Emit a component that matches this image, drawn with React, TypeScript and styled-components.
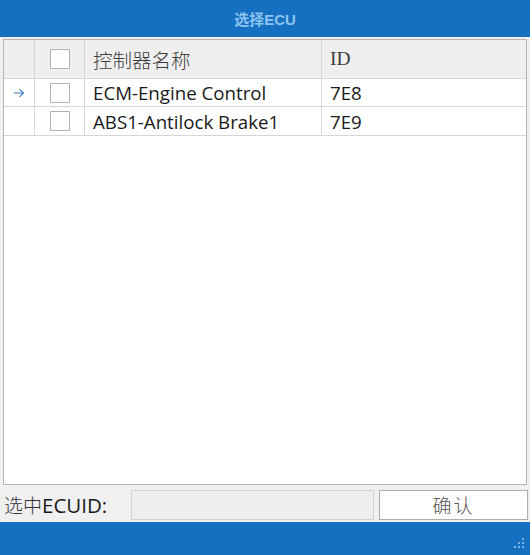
import React from "react";
import styled, { createGlobalStyle } from "styled-components";

const Global = createGlobalStyle`
  *, *::before, *::after { box-sizing: border-box; }
  html, body { margin: 0; padding: 0; background: #ffffff; }
  body { font-family: "Open Sans", "Noto Sans CJK SC", sans-serif; }
`;

const Window = styled.div`
  width: 530px;
  height: 555px;
  display: flex;
  flex-direction: column;
  background: #f0f0f0;
`;

const TitleBar = styled.div`
  height: 37px;
  flex: none;
  background: #1570c2;
  display: flex;
  align-items: center;
  justify-content: center;
  color: #8cc3ef;
  font-family: "Liberation Sans", "Noto Sans CJK SC", sans-serif;
  font-weight: 700;
  font-size: 15px;
`;

const Body = styled.div`
  flex: 1;
  display: flex;
  flex-direction: column;
  padding: 2px 3px 2px 3px;
  gap: 4px;
`;

const Grid = styled.div`
  flex: 1;
  border: 1px solid #b4b4b4;
  background: #ffffff;
  display: flex;
  flex-direction: column;
`;

const Row = styled.div<{ $header?: boolean; $h: number }>`
  display: grid;
  grid-template-columns: 31px 50px 237px 1fr;
  height: ${(p) => p.$h}px;
  flex: none;
  background: ${(p) => (p.$header ? "#efefef" : "#ffffff")};
  border-bottom: 1px solid #d6d6d6;
`;

const Cell = styled.div<{ $header?: boolean; $noLine?: boolean }>`
  display: flex;
  align-items: center;
  padding-left: 8px;
  border-right: ${(p) => (p.$noLine ? "none" : "1px solid #d6d6d6")};
  color: ${(p) => (p.$header ? "#3c3c3c" : "#1a1a1a")};
  font-family: ${(p) =>
    p.$header
      ? `"Liberation Serif", "Noto Sans CJK SC", serif`
      : `"Open Sans", "Noto Sans CJK SC", sans-serif`};
  font-weight: ${(p) => (p.$header ? 300 : 400)};
  font-size: ${(p) => (p.$header ? "19.5px" : "18.7px")};
  white-space: nowrap;
  overflow: hidden;
`;

const IndicatorCell = styled.div`
  display: flex;
  align-items: center;
  padding-left: 9px;
  border-right: 1px solid #d6d6d6;
`;

const CheckCell = styled.div`
  display: flex;
  align-items: center;
  justify-content: center;
  border-right: 1px solid #d6d6d6;
`;

const Check = styled.div`
  width: 20px;
  height: 20px;
  background: #ffffff;
  border: 1px solid #b4b4b4;
`;

const Footer = styled.div`
  height: 31px;
  display: flex;
  align-items: center;
  flex: none;
`;

const Label = styled.div`
  width: 128px;
  flex: none;
  padding-left: 1px;
  color: #1a1a1a;
  white-space: nowrap;
  display: flex;
  align-items: center;
`;

const LabelCjk = styled.span`
  font-family: "Noto Sans CJK SC", sans-serif;
  font-weight: 300;
  font-size: 19px;
  color: #333333;
`;

const LabelLatin = styled.span`
  font-family: "Open Sans", sans-serif;
  font-size: 20.5px;
`;

const TextBox = styled.div`
  width: 243px;
  height: 30px;
  flex: none;
  background: #eeeeee;
  border: 1px solid #d2d2d2;
`;

const Button = styled.button`
  margin-left: 5px;
  width: 149px;
  height: 30px;
  flex: none;
  background: #ffffff;
  border: 1px solid #adadad;
  color: #555555;
  font-family: "Noto Sans CJK SC", sans-serif;
  font-weight: 300;
  font-size: 19px;
  padding: 0;
  letter-spacing: 2px;
`;

const StatusBar = styled.div`
  height: 33px;
  flex: none;
  background: #1570c2;
  display: flex;
  align-items: flex-end;
  justify-content: flex-end;
  padding: 0 4px 5px 0;
`;

const Arrow = () => (
  <svg width="12" height="10" viewBox="0 0 12 10">
    <path d="M1 5 H10.5 M6.5 1.2 L10.5 5 L6.5 8.8" stroke="#3a7ec4" strokeWidth="1.1" fill="none" />
  </svg>
);

const Grip = () => (
  <svg width="14" height="14" viewBox="0 0 14 14">
    {[
      [10, 2],
      [6, 6],
      [10, 6],
      [2, 10],
      [6, 10],
      [10, 10],
    ].map(([x, y], i) => (
      <rect key={i} x={x} y={y} width="2" height="2" fill="#7fb4e6" />
    ))}
  </svg>
);

const rows = [
  { name: "ECM-Engine Control", id: "7E8", current: true },
  { name: "ABS1-Antilock Brake1", id: "7E9", current: false },
];

export default function App() {
  return (
    <>
      <Global />
      <Window>
        <TitleBar>选择ECU</TitleBar>
        <Body>
          <Grid>
            <Row $header $h={39}>
              <IndicatorCell />
              <CheckCell>
                <Check />
              </CheckCell>
              <Cell $header>控制器名称</Cell>
              <Cell $header $noLine>ID</Cell>
            </Row>
            {rows.map((r, i) => (
              <Row key={r.id} $h={i === 0 ? 28 : 29}>
                <IndicatorCell>{r.current && <Arrow />}</IndicatorCell>
                <CheckCell>
                  <Check />
                </CheckCell>
                <Cell>{r.name}</Cell>
                <Cell $noLine>{r.id}</Cell>
              </Row>
            ))}
          </Grid>
          <Footer>
            <Label>
              <LabelCjk>选中</LabelCjk>
              <LabelLatin>ECUID:</LabelLatin>
            </Label>
            <TextBox />
            <Button>确认</Button>
          </Footer>
        </Body>
        <StatusBar>
          <Grip />
        </StatusBar>
      </Window>
    </>
  );
}
